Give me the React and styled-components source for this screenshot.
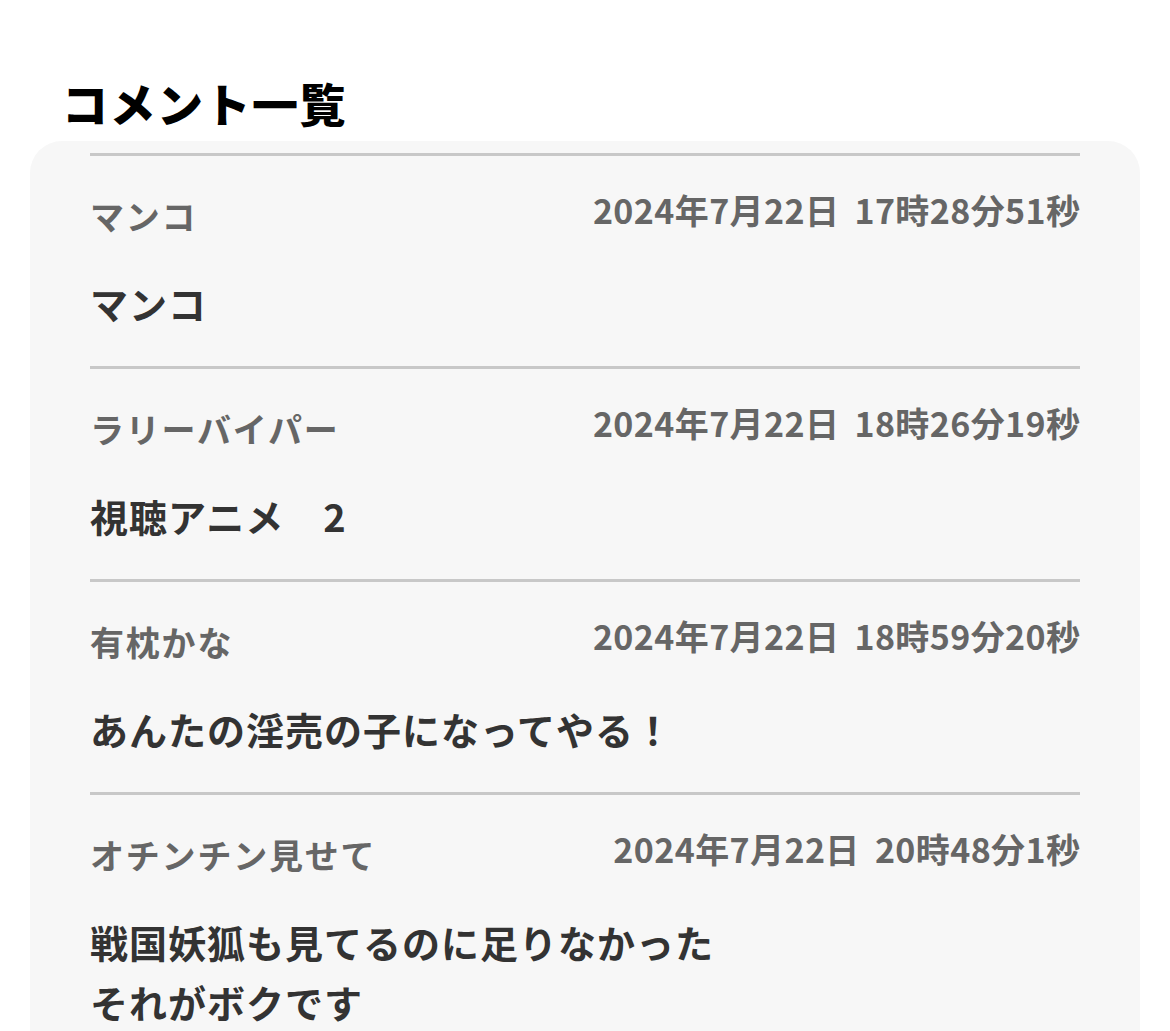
import React from "react";
import styled, { createGlobalStyle } from "styled-components";

const GlobalStyle = createGlobalStyle`
  html, body {
    margin: 0;
    padding: 0;
    background: #ffffff;
    overflow: hidden;
  }
  body {
    font-family: "Noto Sans CJK JP", "Noto Sans", sans-serif;
  }
`;

const Page = styled.main`
  padding: 68px 30px 0;
  box-sizing: border-box;
  width: 1170px;
`;

const Title = styled.h2`
  margin: 0 0 4px;
  padding-left: 32px;
  font-size: 46px;
  line-height: 69px;
  font-weight: 900;
  letter-spacing: 1.5px;
  color: #000000;
`;

const Card = styled.section`
  background: #f7f7f7;
  border-radius: 32px;
  padding: 12px 60px 40px;
`;

const Item = styled.article`
  border-top: 3px solid #c8c8c8;
  padding: 33.5px 0 33px;
`;

const Header = styled.div`
  display: flex;
  justify-content: space-between;
  align-items: flex-start;
  margin-bottom: 32.5px;
`;

const Name = styled.span`
  font-size: 34px;
  line-height: 51px;
  font-weight: 700;
  letter-spacing: 1.8px;
  color: #666666;
`;

const DateText = styled.span`
  font-size: 34px;
  line-height: 40px;
  font-weight: 700;
  letter-spacing: 0.4px;
  word-spacing: 7px;
  color: #666666;
  white-space: nowrap;
  margin-right: -0.4px;
`;

const Body = styled.p`
  margin: 0;
  font-size: 38px;
  line-height: 60px;
  font-weight: 700;
  letter-spacing: 1px;
  color: #333333;
  white-space: pre-wrap;
`;

const comments = [
  { name: "マンコ", date: "2024年7月22日 17時28分51秒", body: "マンコ" },
  { name: "ラリーバイパー", date: "2024年7月22日 18時26分19秒", body: "視聴アニメ　2" },
  { name: "有枕かな", date: "2024年7月22日 18時59分20秒", body: "あんたの淫売の子になってやる！" },
  {
    name: "オチンチン見せて",
    date: "2024年7月22日 20時48分1秒",
    body: "戦国妖狐も見てるのに足りなかった\nそれがボクです",
  },
];

export default function App() {
  return (
    <>
      <GlobalStyle />
      <Page>
        <Title>コメント一覧</Title>
        <Card>
          {comments.map((c, i) => (
            <Item key={i}>
              <Header>
                <Name>{c.name}</Name>
                <DateText>{c.date}</DateText>
              </Header>
              <Body>{c.body}</Body>
            </Item>
          ))}
        </Card>
      </Page>
    </>
  );
}
